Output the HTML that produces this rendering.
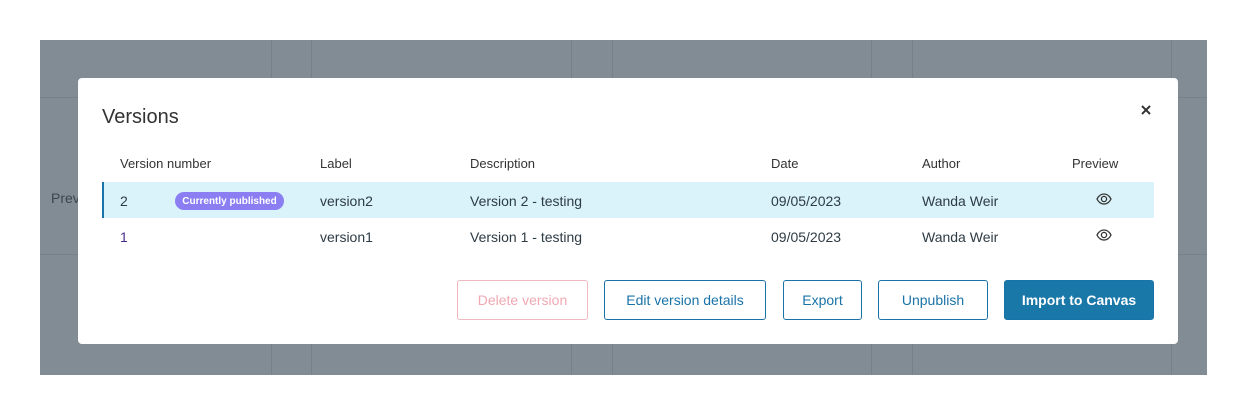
<!DOCTYPE html>
<html><head><style>
body{margin:0;width:1247px;height:415px;background:#fff;position:relative;overflow:hidden;font-family:"Liberation Sans",sans-serif;}
.bd{position:absolute;left:40px;top:40px;width:1167px;height:335px;background:#818c94;}
.vl{position:absolute;top:0;bottom:0;width:1px;background:#76818a;}
.hl{position:absolute;left:0;right:0;height:1px;background:#76818a;}
.m{position:absolute;left:78px;top:78px;width:1100px;height:266px;background:#fff;border-radius:4px;}
.t{position:absolute;font-size:14px;color:#2d3b45;white-space:nowrap;}
.h{font-size:13px;color:#333;}
.btn{position:absolute;top:202px;height:40px;box-sizing:border-box;border:1px solid #1a73a8;border-radius:3px;color:#1a73a8;font-size:14px;display:flex;align-items:center;justify-content:center;}
</style></head><body>
<div class="bd">
<div class="vl" style="left:231px"></div><div class="vl" style="left:271px"></div>
<div class="vl" style="left:531px"></div><div class="vl" style="left:572px"></div>
<div class="vl" style="left:831px"></div><div class="vl" style="left:872px"></div>
<div class="vl" style="left:1131px"></div>
<div class="hl" style="top:57px"></div><div class="hl" style="top:214px"></div>
<div class="t" style="left:11px;top:150px;color:#3b464e;font-size:14px">Prev</div>
</div>
<div class="m">
<div class="t" style="left:24px;top:28px;font-size:20px;color:#333">Versions</div>
<svg style="position:absolute;left:1063px;top:27px" width="10" height="10" viewBox="0 0 10 10"><path d="M1 1L9 9M9 1L1 9" stroke="#333" stroke-width="2"/></svg>
<div class="t h" style="left:42px;top:78px">Version number</div>
<div class="t h" style="left:242px;top:78px">Label</div>
<div class="t h" style="left:392px;top:78px">Description</div>
<div class="t h" style="left:693px;top:78px">Date</div>
<div class="t h" style="left:844px;top:78px">Author</div>
<div class="t h" style="left:994px;top:78px">Preview</div>
<div style="position:absolute;left:24px;top:104px;width:1052px;height:36px;background:#daf3fa;border-left:2px solid #1a73a8;box-sizing:border-box"></div>
<div class="t" style="left:42px;top:115px">2</div>
<div style="position:absolute;left:97px;top:114px;width:109px;height:18px;border-radius:9px;background:#8a7ef2;color:#fff;font-size:10px;font-weight:bold;display:flex;align-items:center;justify-content:center">Currently published</div>
<div class="t" style="left:242px;top:115px">version2</div>
<div class="t" style="left:392px;top:115px">Version 2 - testing</div>
<div class="t" style="left:693px;top:115px">09/05/2023</div>
<div class="t" style="left:844px;top:115px">Wanda Weir</div>
<div class="t" style="left:42px;top:151px;color:#4a2c8a">1</div>
<div class="t" style="left:242px;top:151px">version1</div>
<div class="t" style="left:392px;top:151px">Version 1 - testing</div>
<div class="t" style="left:693px;top:151px">09/05/2023</div>
<div class="t" style="left:844px;top:151px">Wanda Weir</div>
<svg style="position:absolute;left:1018px;top:115px" width="16" height="12" viewBox="0 0 16 12"><path d="M1 6C3 2 5.5 1 8 1S13 2 15 6C13 10 10.5 11 8 11S3 10 1 6Z" fill="none" stroke="#333" stroke-width="1.3"/><circle cx="8" cy="6" r="2.6" fill="none" stroke="#333" stroke-width="1.3"/></svg>
<svg style="position:absolute;left:1018px;top:151px" width="16" height="12" viewBox="0 0 16 12"><path d="M1 6C3 2 5.5 1 8 1S13 2 15 6C13 10 10.5 11 8 11S3 10 1 6Z" fill="none" stroke="#333" stroke-width="1.3"/><circle cx="8" cy="6" r="2.6" fill="none" stroke="#333" stroke-width="1.3"/></svg>
<div class="btn" style="left:379px;width:131px;border-color:#f0b8bf;color:#f0a8b2">Delete version</div>
<div class="btn" style="left:526px;width:162px">Edit version details</div>
<div class="btn" style="left:705px;width:79px">Export</div>
<div class="btn" style="left:800px;width:110px">Unpublish</div>
<div class="btn" style="left:926px;width:150px;background:#1a78a8;color:#fff;font-weight:bold">Import to Canvas</div>
</div>
</body></html>
